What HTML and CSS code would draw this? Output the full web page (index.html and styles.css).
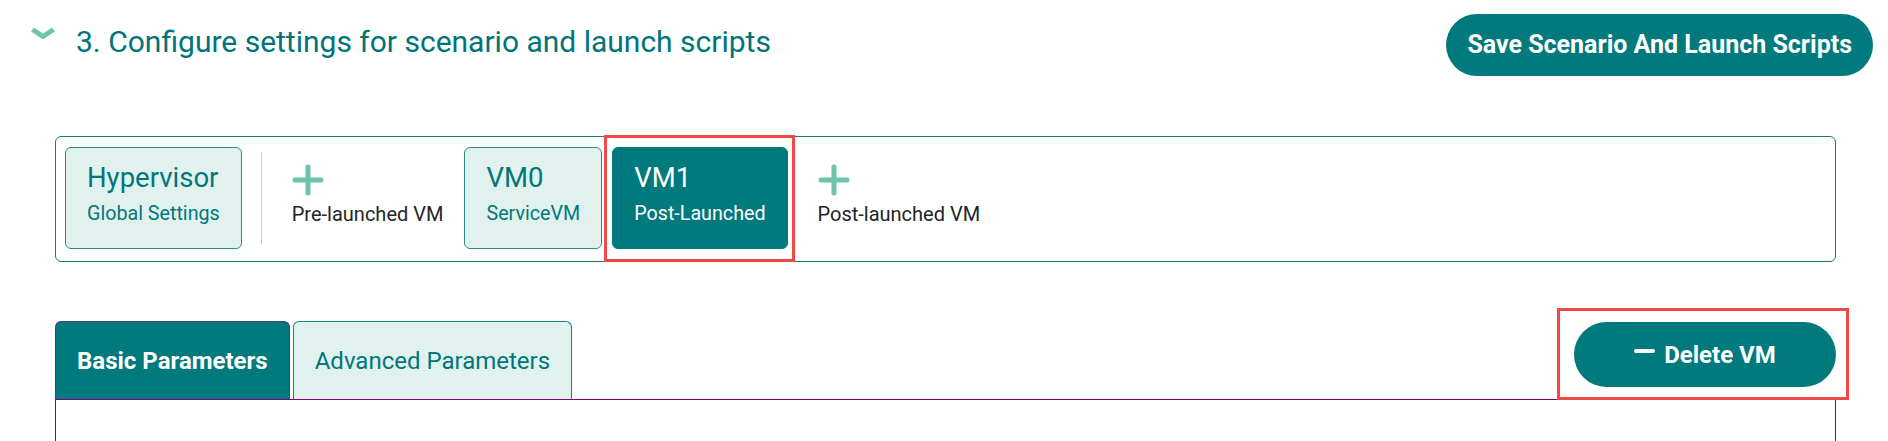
FILE: index.html
```html
<!DOCTYPE html>
<html lang="en">
<head>
<meta charset="utf-8">
<title>Configure settings</title>
<link rel="stylesheet" href="styles.css">
</head>
<body>
<header class="header">
  <div class="title-group">
    <svg class="chevron" width="26" height="12" viewBox="0 0 26 12" aria-hidden="true">
      <polyline points="2.5,2.5 13,9.5 23.5,2.5" fill="none" stroke="#6cc3ae" stroke-width="5" stroke-linejoin="miter" stroke-linecap="butt"/>
    </svg>
    <h2 class="title">3. Configure settings for scenario and launch scripts</h2>
  </div>
  <button class="btn-save">Save Scenario And Launch Scripts</button>
</header>

<main class="content">
  <section class="vm-box">
    <div class="card">
      <div class="card-name">Hypervisor</div>
      <div class="card-sub">Global Settings</div>
    </div>
    <div class="divider"></div>
    <div class="add-item">
      <svg class="plus" width="32" height="32" viewBox="0 0 32 32" aria-hidden="true">
        <path d="M16 3 V29 M3 16 H29" stroke="#6cc3ae" stroke-width="5" stroke-linecap="round" fill="none"/>
      </svg>
      <div class="add-label">Pre-launched VM</div>
    </div>
    <div class="card">
      <div class="card-name">VM0</div>
      <div class="card-sub">ServiceVM</div>
    </div>
    <div class="card card-active">
      <div class="card-name">VM1</div>
      <div class="card-sub">Post-Launched</div>
      <span class="highlight hl-card"></span>
    </div>
    <div class="add-item add-item-post">
      <svg class="plus" width="32" height="32" viewBox="0 0 32 32" aria-hidden="true">
        <path d="M16 3 V29 M3 16 H29" stroke="#6cc3ae" stroke-width="5" stroke-linecap="round" fill="none"/>
      </svg>
      <div class="add-label">Post-launched VM</div>
    </div>
  </section>

  <div class="tab-row">
    <div class="tabs">
      <div class="tab tab-active">Basic Parameters</div>
      <div class="tab">Advanced Parameters</div>
    </div>
    <div class="delete-wrap">
      <button class="btn-delete"><span class="minus"></span>Delete VM</button>
      <span class="highlight hl-delete"></span>
    </div>
  </div>
  <div class="panel"></div>
</main>
</body>
</html>
```

FILE: styles.css
```css
* { box-sizing: border-box; }

html, body {
  margin: 0;
  padding: 0;
  background: #ffffff;
  font-family: Roboto, "Liberation Sans", sans-serif;
  overflow: hidden;
}

.header {
  display: flex;
  align-items: flex-start;
  padding: 14px 15px 0 30px;
}

.title-group {
  display: flex;
  align-items: flex-start;
}

.chevron {
  display: block;
  margin-top: 13px;
}

.title {
  margin: 10px 0 0 20px;
  font-size: 30px;
  line-height: 36px;
  font-weight: 400;
  color: #00747a;
}

.btn-save {
  margin-left: auto;
  height: 62px;
  padding: 0 21px;
  border: none;
  border-radius: 31px;
  background: #007a7d;
  color: #ffffff;
  font-family: Roboto, "Liberation Sans", sans-serif;
  font-weight: 700;
  font-size: 25px;
  line-height: 30px;
}

.content {
  padding: 0 52px 0 55px;
}

.vm-box {
  margin-top: 60px;
  display: flex;
  align-items: flex-start;
  gap: 10px;
  border: 1px solid #1b7c80;
  border-radius: 6px;
  padding: 10px 9px 12px 9px;
}

.card {
  position: relative;
  height: 102px;
  padding: 13px 21px 0 21px;
  background: #e1f2ee;
  border: 1px solid #2a8a8a;
  border-radius: 6px;
  color: #00777b;
}

.card-name {
  font-size: 27.5px;
  line-height: 34px;
}

.card-sub {
  margin-top: 7px;
  font-size: 19.7px;
  line-height: 24px;
}

.card-active {
  background: #007a7d;
  border-color: #007a7d;
  color: #ffffff;
}

.divider {
  width: 1px;
  height: 92px;
  margin: 5px 0 0 9px;
  background: #cccccc;
}

.add-item {
  display: flex;
  flex-direction: column;
  align-items: flex-start;
  padding: 17px 11px 0 20px;
}

.add-item-post {
  padding-left: 20px;
}

.plus {
  display: block;
}

.add-label {
  margin-top: 6px;
  font-size: 20px;
  line-height: 24px;
  color: #212529;
}

.highlight {
  position: absolute;
  border: 3px solid #f44848;
  pointer-events: none;
}

.hl-card {
  left: -9px;
  top: -13px;
  right: -8px;
  bottom: -14px;
}

.tab-row {
  margin-top: 59px;
  display: flex;
  align-items: flex-start;
  justify-content: space-between;
}

.tabs {
  display: flex;
  gap: 3px;
}

.tab {
  height: 78px;
  padding: 0 21px;
  display: flex;
  align-items: center;
  background: #e1f2ee;
  border: 1px solid #138488;
  border-bottom: none;
  border-radius: 6px 6px 0 0;
  color: #00777b;
  font-size: 24px;
}

.tab-active {
  background: #007a7d;
  border-color: #3d3f7e;
  color: #ffffff;
  font-weight: 700;
}

.delete-wrap {
  position: relative;
  margin-top: 1px;
}

.btn-delete {
  display: flex;
  align-items: center;
  justify-content: center;
  width: 262px;
  height: 65px;
  border: none;
  border-radius: 33px;
  background: #007a7d;
  color: #ffffff;
  font-family: Roboto, "Liberation Sans", sans-serif;
  font-weight: 700;
  font-size: 24px;
}

.minus {
  display: inline-block;
  width: 21px;
  height: 4px;
  border-radius: 2px;
  background: #ffffff;
  margin-right: 9px;
  margin-top: -8px;
}

.hl-delete {
  left: -17px;
  top: -14px;
  right: -13px;
  bottom: -13px;
}

.panel {
  height: 120px;
  border: 1px solid #800080;
  border-bottom: none;
}
```
